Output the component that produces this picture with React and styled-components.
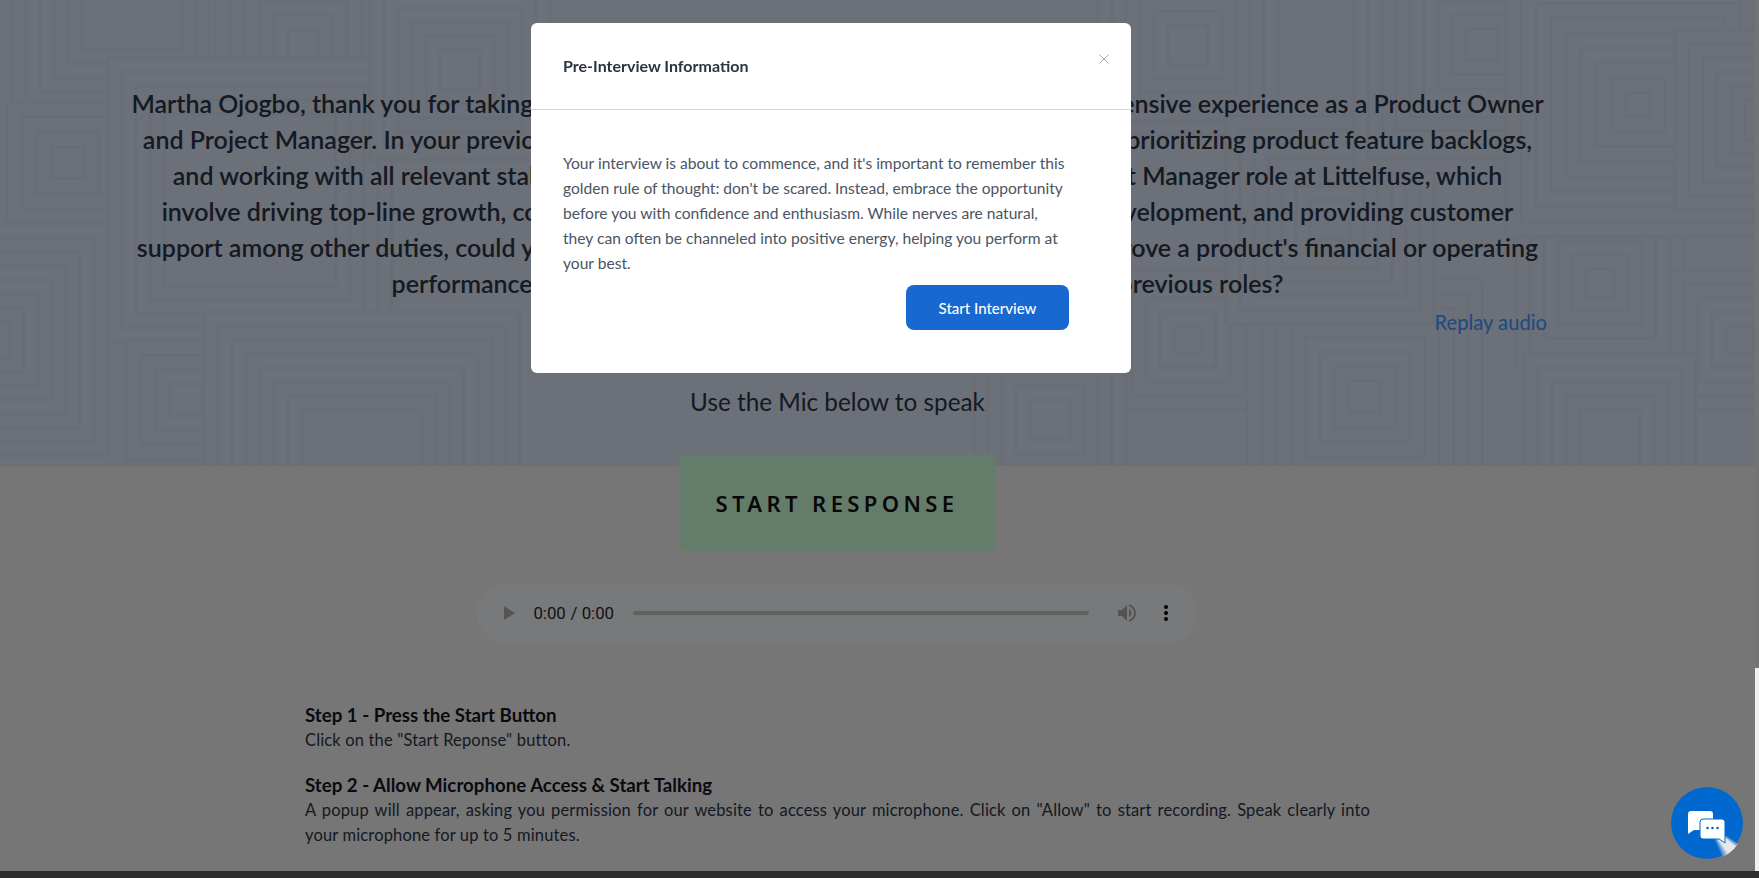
import React from "react";
import styled, { createGlobalStyle } from "styled-components";

const Global = createGlobalStyle`
  html, body { margin: 0; padding: 0; height: 100%; overflow: hidden; background: #ecedef; }
  * { box-sizing: border-box; }
  body { font-family: Lato, "Liberation Sans", sans-serif; }
`;

const Page = styled.main`
  width: 1759px;
  height: 878px;
  overflow: hidden;
  background: #ecedef;
  color: #2b3444;
`;

const Hero = styled.section`
  position: relative;
  height: 466px;
  padding: 85px 213px 0 129px;
  background: #d8e0f0;
  overflow: hidden;
  display: flex;
  flex-direction: column;
  align-items: center;
`;

const PatternSvg = styled.svg`
  position: absolute;
  inset: 0;
  width: 100%;
  height: 100%;
`;

const Question = styled.p`
  position: relative;
  margin: 0;
  width: 1417px;
  font-size: 25px;
  line-height: 36px;
  font-weight: 600;
  text-align: center;
  color: #2b3444;
  white-space: nowrap;
`;

const ReplayLink = styled.a`
  position: relative;
  align-self: flex-end;
  margin: 9px -1px 0 0;
  font-size: 20.2px;
  line-height: 24px;
  color: #3a94ff;
`;

const MicHint = styled.p`
  position: relative;
  margin: 52px 0 0;
  font-size: 24.3px;
  line-height: 32px;
  color: #2b3444;
`;

const Main = styled.div`
  display: flex;
  flex-direction: column;
  align-items: center;
  padding-right: 85px;
`;

const StartButton = styled.button`
  position: relative;
  width: 316px;
  height: 96px;
  margin-top: -11px;
  border: 0;
  border-radius: 6px;
  background: #c9fbd5;
  color: #111;
  font-family: "Noto Sans", sans-serif;
  font-size: 22px;
  font-weight: 600;
  letter-spacing: 4.4px;
  text-transform: uppercase;
  padding-bottom: 2px;
`;

const Player = styled.audio`
  display: block;
  width: 600px;
  height: 50px;
  zoom: 1.2;
  margin-top: 26.7px;
`;

const Steps = styled.div`
  width: 1065px;
  margin: 60px 0 0 305px;
  align-self: flex-start;
`;

const Step = styled.div`
  margin-bottom: 20px;
`;

const StepTitle = styled.h3`
  margin: 0;
  font-size: 18.7px;
  line-height: 25px;
  font-weight: 700;
  color: #14171f;
`;

const StepText = styled.p`
  margin: 0;
  font-size: 16.5px;
  line-height: 25px;
  letter-spacing: 0.15px;
  text-align: justify;
  color: #2b3444;
`;

const Overlay = styled.div`
  position: fixed;
  inset: 0;
  padding: 23px 97px 0 0;
  background: rgba(0, 0, 0, 0.5);
  display: flex;
  justify-content: center;
  align-items: flex-start;
`;

const Modal = styled.div`
  width: 600px;
  height: 350px;
  background: #fff;
  border-radius: 6px;
  display: flex;
  flex-direction: column;
`;

const ModalHeader = styled.header`
  position: relative;
  height: 87px;
  padding: 32px 32px 0;
  border-bottom: 1px solid #d1d5db;
  flex: none;
`;

const ModalTitle = styled.h2`
  margin: 0;
  font-size: 16px;
  line-height: 22px;
  font-weight: 700;
  color: #2b3444;
`;

const CloseButton = styled.button`
  position: absolute;
  top: 26px;
  right: 15px;
  width: 24px;
  height: 20px;
  padding: 0;
  border: 0;
  background: none;
  color: #a3a7ae;
  display: flex;
  align-items: center;
  justify-content: center;
`;

const ModalBody = styled.div`
  padding: 41px 62px 0 32px;
  display: flex;
  flex-direction: column;
`;

const ModalText = styled.p`
  margin: 0;
  font-size: 15.6px;
  line-height: 25px;
  color: #4b5563;
`;

const ModalAction = styled.button`
  align-self: flex-end;
  width: 163px;
  height: 45px;
  margin-top: 9px;
  border: 0;
  border-radius: 8px;
  background: #1769d0;
  color: #fff;
  font: 500 15px Lato, "Liberation Sans", sans-serif;
`;

const ScrollTrack = styled.div`
  position: fixed;
  top: 0;
  right: 0;
  width: 4px;
  height: 871px;
  padding-top: 668px;
  background: #727373;
`;

const ScrollThumb = styled.div`
  height: 203px;
  background: #eef0f2;
`;

const BottomBar = styled.div`
  position: fixed;
  left: 0;
  right: 0;
  bottom: 0;
  height: 7px;
  background: #2c2d2e;
`;

const ChatWidget = styled.button`
  position: fixed;
  left: 1671px;
  top: 787px;
  width: 72px;
  height: 72px;
  padding: 0;
  border: 0;
  border-radius: 50%;
  background: #0068cf;

  &::before {
    content: "";
    position: absolute;
    inset: 1px -1px -1px 1px;
    border-radius: 50%;
    background: conic-gradient(transparent 122deg, #e8e8e8 130deg, #e8e8e8 145deg, transparent 158deg);
    z-index: -1;
  }
`;

const ChatIcon = styled.svg`
  position: relative;
  display: block;
`;

const nests = [
  [132, 0, 50, 6, 14], [68, 163, 16, 4, 15], [303, 45, 15, 6, 14.5], [250, 200, 86, 5, 14],
  [-8, 340, 18, 8, 14], [186, 400, 16, 4, 14.5], [362, 470, 60, 8, 14], [460, 70, 20, 6, 14],
  [1188, 340, 14, 5, 14], [1188, 45, 20, 6, 14], [1365, 397, 16, 8, 14.5], [1330, 220, 20, 7, 14],
  [1482, 45, 16, 9, 14], [1600, 283, 14, 6, 14], [1638, 105, 12, 9, 15], [1740, 340, 14, 5, 14],
  [1610, 440, 30, 5, 14], [1765, 120, 20, 6, 14], [1050, 420, 20, 5, 14],
];

function Pattern() {
  return (
    <PatternSvg aria-hidden="true">
      {nests.map(([cx, cy, inner, rings, step], i) =>
        Array.from({ length: rings }, (_, r) => {
          const half = inner + (rings - 1 - r) * step;
          return (
            <rect
              key={`${i}-${r}`}
              x={cx - half}
              y={cy - half}
              width={half * 2}
              height={half * 2}
              fill="#d8e0f0"
              stroke="#d3dbeb"
              strokeWidth="3"
            />
          );
        })
      )}
    </PatternSvg>
  );
}

const lines = [
  "Martha Ojogbo, thank you for taking the time to speak with us today. We noticed your extensive experience as a Product Owner",
  "and Project Manager. In your previous roles you were always responsible for defining and prioritizing product feature backlogs,",
  "and working with all relevant stakeholders. Considering the needs of the Senior Product Manager role at Littelfuse, which",
  "involve driving top-line growth, considering core market trends, leading new product development, and providing customer",
  "support among other duties, could you share a specific example of a moment where you drove a product's financial or operating",
  "performance, and what metrics you used to gauge success in your previous roles?",
];

export default function App() {
  return (
    <>
      <Global />
      <Page>
        <Hero>
          <Pattern />
          <Question>
            {lines.map((l) => (
              <React.Fragment key={l}>
                {l}
                <br />
              </React.Fragment>
            ))}
          </Question>
          <ReplayLink>Replay audio</ReplayLink>
          <MicHint>Use the Mic below to speak</MicHint>
        </Hero>
        <Main>
          <StartButton>Start Response</StartButton>
          <Player controls />
          <Steps>
            <Step>
              <StepTitle>Step 1 - Press the Start Button</StepTitle>
              <StepText>Click on the "Start Reponse" button.</StepText>
            </Step>
            <Step>
              <StepTitle>Step 2 - Allow Microphone Access &amp; Start Talking</StepTitle>
              <StepText>
                A popup will appear, asking you permission for our website to access your microphone. Click on "Allow" to start recording. Speak clearly into your microphone for up to 5 minutes.
              </StepText>
            </Step>
            <Step>
              <StepTitle>Step 3 - Submit Your Response</StepTitle>
            </Step>
          </Steps>
        </Main>
      </Page>
      <Overlay>
        <Modal>
          <ModalHeader>
            <ModalTitle>Pre-Interview Information</ModalTitle>
            <CloseButton aria-label="Close">
              <svg width="10" height="10" viewBox="0 0 10 10">
                <path d="M0.5 0.5 L9.5 9.5 M9.5 0.5 L0.5 9.5" stroke="currentColor" strokeWidth="1" fill="none" />
              </svg>
            </CloseButton>
          </ModalHeader>
          <ModalBody>
            <ModalText>
              Your interview is about to commence, and it's important to remember this golden rule of thought: don't be scared. Instead, embrace the opportunity before you with confidence and enthusiasm. While nerves are natural, they can often be channeled into positive energy, helping you perform at your best.
            </ModalText>
            <ModalAction>Start Interview</ModalAction>
          </ModalBody>
        </Modal>
      </Overlay>
      <ScrollTrack>
        <ScrollThumb />
      </ScrollTrack>
      <BottomBar />
      <ChatWidget aria-label="Open chat">
        <ChatIcon width="72" height="72" viewBox="0 0 72 72">
          <path d="M20 24 H39 A3 3 0 0 1 42 27 V32 H33 A4 4 0 0 0 29 36 V43 H23 L17 47 V27 A3 3 0 0 1 20 24 Z" fill="#fff" />
          <path d="M32 32 H51 A3 3 0 0 1 54 35 V56 L48 52 H32 A3 3 0 0 1 29 49 V35 A3 3 0 0 1 32 32 Z" fill="#fff" stroke="#0068cf" strokeWidth="1" />
          <circle cx="36.500" cy="41" r="1.300" fill="#0068cf" />
          <circle cx="41.500" cy="41" r="1.300" fill="#0068cf" />
          <circle cx="46.500" cy="41" r="1.300" fill="#0068cf" />
        </ChatIcon>
      </ChatWidget>
    </>
  );
}
